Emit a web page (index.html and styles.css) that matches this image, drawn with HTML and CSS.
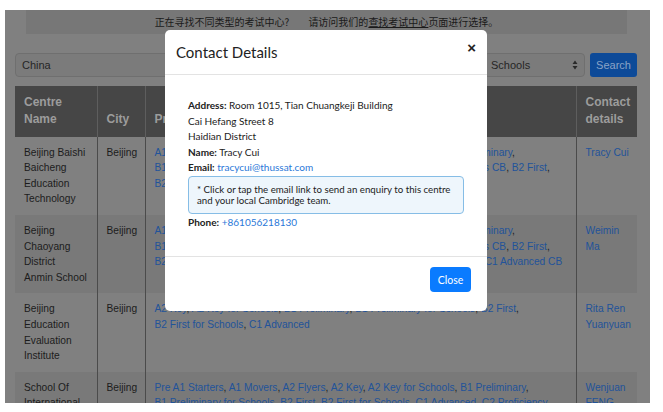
FILE: index.html
```html
<!DOCTYPE html>
<html>
<head>
    <meta charset="UTF-8">
    <meta name="viewport" content="width=device-width, initial-scale=1.0">
    <title>Find a centre</title>
    <link rel="stylesheet" href="styles.css">
</head>
<body>
    <div class="page">
        <div class="notice">正在寻找不同类型的考试中心?<span class="gap"></span>请访问我们的<a href="#">查找考试中心</a>页面进行选择。</div>

        <div class="search-row">
            <div class="field">China</div>
            <div class="field select">
                <span>Schools</span>
                <svg width="6" height="10" viewBox="0 0 6 10"><path d="M3 0.5 L5.5 4 H0.5 Z M3 9.5 L5.5 6 H0.5 Z" fill="#2a2a2a"/></svg>
            </div>
            <button class="search-btn">Search</button>
        </div>

        <table class="centres">
            <thead>
                <tr>
                    <th class="c-name">Centre Name</th>
                    <th class="c-city">City</th>
                    <th class="c-prog">Programmes</th>
                    <th class="c-contact">Contact details</th>
                </tr>
            </thead>
            <tbody>
                <tr>
                    <td>Beijing Baishi Baicheng Education Technology</td>
                    <td>Beijing</td>
                    <td class="prog"><a href="#">A1 Movers</a>, <a href="#">A2 Key</a>, <a href="#">A2 Key for Schools</a>, <a href="#">A2 Key for Schools CB</a>, <a href="#">B1 Preliminary</a>, <a href="#">B1 Preliminary CB</a>, <a href="#">B1 Preliminary for Schools</a>, <a href="#">B1 Preliminary for Schools CB</a>, <a href="#">B2 First</a>, <a href="#">B2 First for Schools</a>, <a href="#">B2 First for Schools CB</a></td>
                    <td><a href="#">Tracy Cui</a></td>
                </tr>
                <tr>
                    <td>Beijing Chaoyang District Anmin&nbsp;School</td>
                    <td>Beijing</td>
                    <td class="prog"><a href="#">A1 Movers</a>, <a href="#">A2 Key</a>, <a href="#">A2 Key for Schools</a>, <a href="#">A2 Key for Schools CB</a>, <a href="#">B1 Preliminary</a>, <a href="#">B1 Preliminary CB</a>, <a href="#">B1 Preliminary for Schools</a>, <a href="#">B1 Preliminary for Schools CB</a>, <a href="#">B2 First</a>, <a href="#">B2 First CB</a>, <a href="#">B2 First for Schools</a>, <a href="#">B2 First for Schools CB</a>, <a href="#">C1 Advanced</a>, <a href="#">C1 Advanced CB</a></td>
                    <td><a href="#">Weimin Ma</a></td>
                </tr>
                <tr>
                    <td>Beijing Education Evaluation Institute</td>
                    <td>Beijing</td>
                    <td class="prog"><a href="#">A2 Key</a>, <a href="#">A2 Key for Schools</a>, <a href="#">B1 Preliminary</a>, <a href="#">B1 Preliminary for Schools</a>, <a href="#">B2 First</a>, <a href="#">B2 First for Schools</a>, <a href="#">C1 Advanced</a></td>
                    <td><a href="#">Rita Ren Yuanyuan</a></td>
                </tr>
                <tr>
                    <td>School Of International Education</td>
                    <td>Beijing</td>
                    <td class="prog"><a href="#">Pre A1 Starters</a>, <a href="#">A1 Movers</a>, <a href="#">A2 Flyers</a>, <a href="#">A2 Key</a>, <a href="#">A2 Key for Schools</a>, <a href="#">B1 Preliminary</a>, <a href="#">B1 Preliminary for Schools</a>, <a href="#">B2 First</a>, <a href="#">B2 First for Schools</a>, <a href="#">C1 Advanced</a>, <a href="#">C2 Proficiency</a></td>
                    <td><a href="#">Wenjuan FENG</a></td>
                </tr>
            </tbody>
        </table>

        <div class="modal">
            <div class="modal-header">
                <h2>Contact Details</h2>
                <span class="close-x">&times;</span>
            </div>
            <div class="modal-body">
                <p><b>Address:</b> Room 1015, Tian Chuangkeji Building<br>Cai Hefang Street 8<br>Haidian District</p>
                <p><b>Name:</b> Tracy Cui</p>
                <p><b>Email:</b> <a href="#">tracycui@thussat.com</a></p>
                <div class="hint">* Click or tap the email link to send an enquiry to this centre and your local Cambridge team.</div>
                <p class="phone"><b>Phone:</b> <a href="#">+861056218130</a></p>
            </div>
            <div class="modal-footer">
                <button class="close-btn">Close</button>
            </div>
        </div>
    </div>
</body>
</html>
```

FILE: styles.css
```css
body {
    margin: 0;
    background-color: #FFFFFF;
    font-family: 'Liberation Sans', Arial, sans-serif;
}
.page {
    position: relative;
    width: 645px;
    height: 393px;
    margin: 10px 0 0 5px;
    background-color: #808080;
    overflow: hidden;
}
.notice {
    height: 24px;
    margin: 0 23px 0 21px;
    background-color: #777777;
    color: #1a1a1a;
    font-family: 'Noto Sans CJK SC', sans-serif;
    font-size: 10px;
    line-height: 23px;
    text-align: center;
}
.notice a {
    color: #1a1a1a;
    text-decoration: underline;
}
.notice .gap {
    display: inline-block;
    width: 19px;
}
.search-row {
    display: flex;
    gap: 5px;
    height: 24px;
    margin-top: 19px;
    padding: 0 13px 0 10px;
}
.field {
    flex: 1;
    display: flex;
    align-items: center;
    padding: 0 6px;
    background-color: #7b7b7b;
    border: 1px solid #6f6f6f;
    border-radius: 4px;
    color: #262626;
    font-size: 11px;
}
.select {
    flex: 0 0 101px;
    box-sizing: border-box;
    justify-content: space-between;
}
.search-btn {
    width: 47px;
    border: none;
    border-radius: 3px;
    background-color: #0d4a98;
    color: #8aa3c6;
    font-family: 'Liberation Sans', Arial, sans-serif;
    font-size: 11px;
    padding: 0;
}
.centres {
    width: 622px;
    margin: 9px 0 0 10px;
    border-collapse: collapse;
    table-layout: fixed;
    font-size: 10.2px;
    line-height: 15.6px;
    color: #1c1c1c;
}
.centres th,
.centres td {
    box-sizing: border-box;
    padding: 8px 9px;
    text-align: left;
}
.centres th {
    background-color: #464646;
    color: #9c9c9c;
    font-size: 12px;
    line-height: 17.3px;
    vertical-align: bottom;
    border-left: 1px solid #5e5e5e;
}
.centres th:first-child,
.centres td:first-child {
    border-left: none;
    padding-right: 5px;
}
.centres th:last-child,
.centres td:last-child {
    padding-right: 6px;
}
.c-name { width: 82px; }
.c-city { width: 48px; }
.c-contact { width: 61px; }
.centres td {
    vertical-align: top;
    border-left: 1px solid #4b4b4b;
}
.centres td.prog {
    padding-right: 7px;
}
.prog a {
    white-space: nowrap;
}
.centres tbody tr:nth-child(even) td {
    background-color: #797979;
}
.centres a {
    color: #22539a;
    text-decoration: none;
}
.modal {
    position: absolute;
    left: 160px;
    top: 20px;
    width: 322px;
    height: 281px;
    background-color: #FFFFFF;
    border-radius: 5px;
    font-family: 'Lato', sans-serif;
    color: #222222;
    display: flex;
    flex-direction: column;
}
.modal-header {
    display: flex;
    justify-content: space-between;
    height: 44px;
    padding: 0 11px;
    border-bottom: 1px solid #e3e3e3;
}
.modal-header h2 {
    margin: 0;
    font-size: 15px;
    font-weight: normal;
    line-height: 44px;
}
.close-x {
    font-family: 'Liberation Sans', Arial, sans-serif;
    font-size: 15px;
    font-weight: bold;
    line-height: 36px;
}
.modal-body {
    flex: 1;
    padding: 23px;
    font-size: 10px;
    line-height: 15.5px;
}
.modal-body p {
    margin: 0;
}
.modal-body a {
    color: #2a78d8;
    text-decoration: none;
}
.hint {
    padding: 7px 8px 6px;
    border: 1px solid #86bde6;
    border-radius: 4px;
    background-color: #eef6fc;
    font-size: 9.7px;
    line-height: 11.6px;
}
.phone {
    margin-top: 1px !important;
}
.modal-footer {
    display: flex;
    justify-content: flex-end;
    padding: 10px 16px 19px;
    border-top: 1px solid #e3e3e3;
}
.close-btn {
    width: 41px;
    height: 25px;
    padding: 0;
    border: none;
    border-radius: 4px;
    background-color: #0a7bff;
    color: #FFFFFF;
    font-family: 'Lato', sans-serif;
    font-size: 10.5px;
}
```
